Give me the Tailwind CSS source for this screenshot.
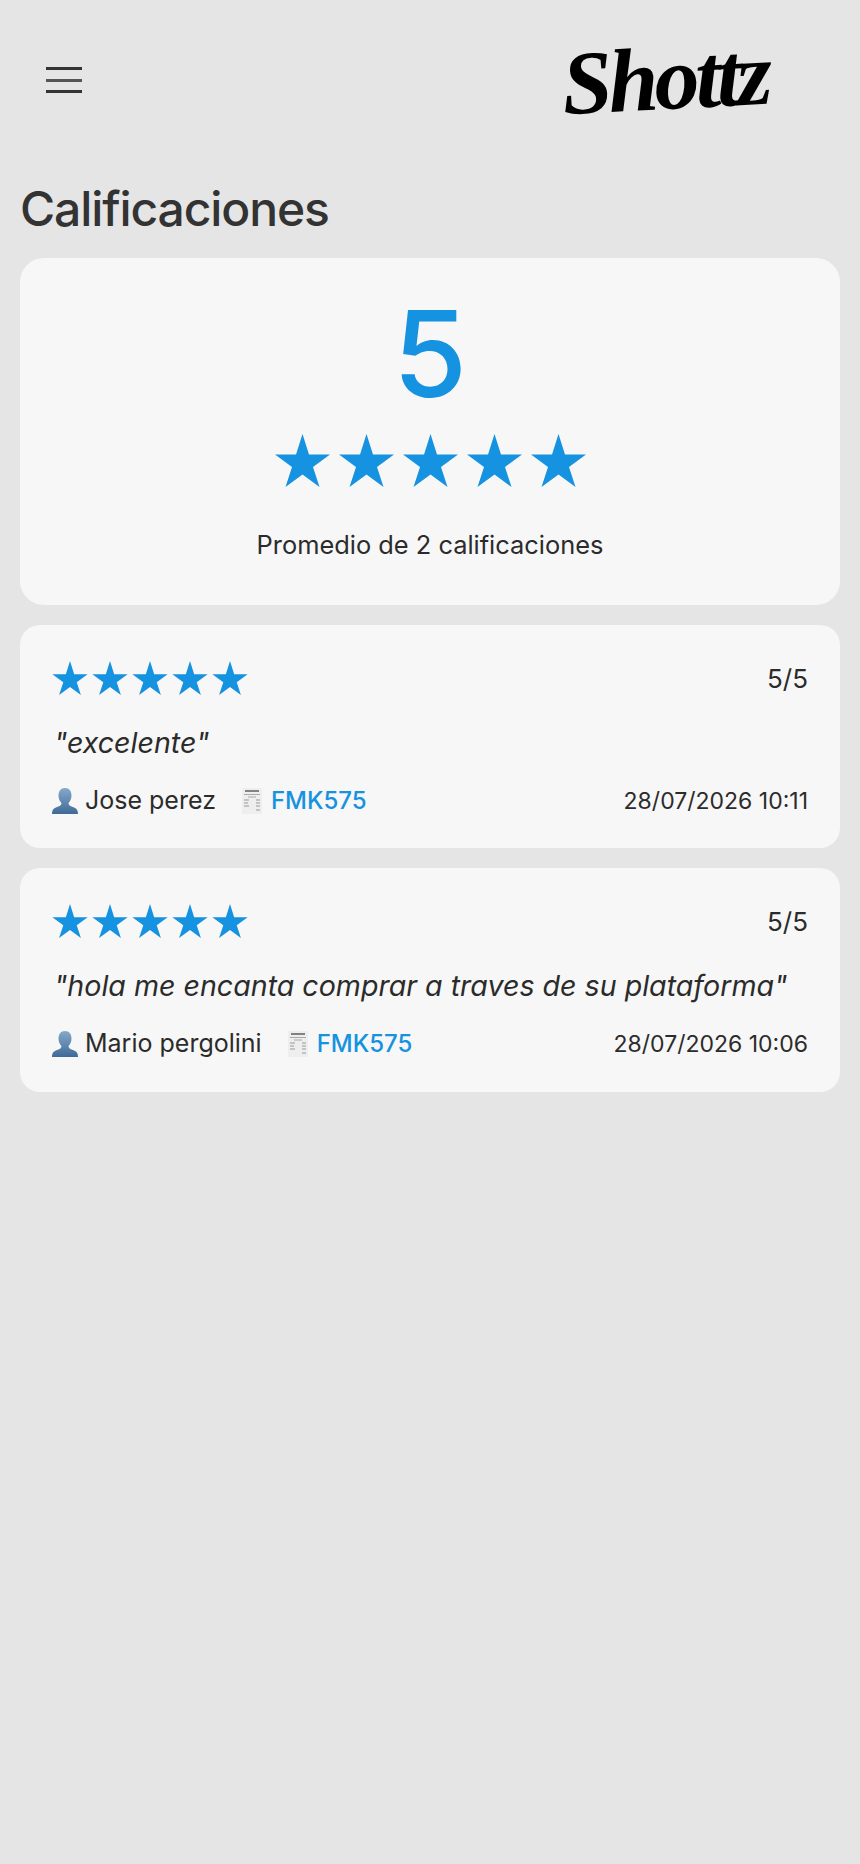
<!DOCTYPE html>
<html lang="es">
<head>
  <meta charset="UTF-8" />
  <title>Calificaciones</title>
  <script src="https://cdn.jsdelivr.net/npm/@tailwindcss/browser@4"></script>
</head>
<body class="bg-[#e5e5e5] text-[#2b2b2b] min-h-screen font-['Inter','Liberation_Sans',sans-serif]">

  <!-- iconos compartidos -->
  <svg class="absolute w-0 h-0">
    <defs>
      <linearGradient id="personFill" x1="0" y1="0" x2="0" y2="1">
        <stop offset="0" stop-color="#86a9cb" />
        <stop offset="1" stop-color="#3f6a97" />
      </linearGradient>
    </defs>
    <symbol id="star" viewBox="0 0 55 53">
      <path fill="#1592e0" d="M27.5 0L34 20.5H55L38 33L44.5 53L27.5 40.5L10.5 53L17 33L0 20.5H21Z" />
    </symbol>
    <symbol id="person" viewBox="0 0 26 26">
      <path fill="url(#personFill)" d="M13 0C17.5 0 19.5 3.5 19.5 7.5C19.5 11 18 13.5 16.5 15C16.5 17 18 18 21 19C24 20 26 21.5 26 26H0C0 21.5 2 20 5 19C8 18 9.5 17 9.5 15C8 13.5 6.5 11 6.5 7.5C6.5 3.5 8.5 0 13 0Z" />
    </symbol>
    <symbol id="receipt" viewBox="0 0 20 26">
      <rect width="20" height="26" fill="#eeeeee" />
      <path stroke="#666" stroke-width="1.6" d="M3 3H17" />
      <path stroke="#aaa" stroke-width="1" d="M2 6.5H18M6 9H14" />
      <path stroke="#999" stroke-width="1" d="M2 12H7M14 12H18M2 15H6M14 15H18M2 18H7M14 18H18M14 22H18" />
    </symbol>
  </svg>

  <!-- encabezado -->
  <header class="h-[178px] flex justify-between pl-[46px] pr-[92px]">
    <button class="w-9 h-[26px] mt-[67px] flex flex-col justify-between">
      <span class="block w-9 h-[3px] bg-[#333]"></span>
      <span class="block w-9 h-[3px] bg-[#555]"></span>
      <span class="block w-9 h-[3px] bg-[#333]"></span>
    </button>
    <div class="mt-[30px] h-[97px] leading-[97px] text-[90px] font-bold italic text-black font-['Liberation_Serif',serif] tracking-[-4px] -rotate-3">Shottz</div>
  </header>

  <main class="px-5">
    <h1 class="text-[48px] leading-[62px] font-medium text-[#333] tracking-[-1.1px] mb-[18px]">Calificaciones</h1>

    <!-- promedio -->
    <section class="h-[347px] bg-[#f7f7f7] rounded-[24px] flex flex-col items-center mb-5">
      <div class="mt-[30px] h-[132px] leading-[132px] text-[120px] font-medium text-[#1592e0]">5</div>
      <div class="mt-[14px] flex gap-[9px]">
        <svg class="w-[55px] h-[53px]"><use href="#star" /></svg>
        <svg class="w-[55px] h-[53px]"><use href="#star" /></svg>
        <svg class="w-[55px] h-[53px]"><use href="#star" /></svg>
        <svg class="w-[55px] h-[53px]"><use href="#star" /></svg>
        <svg class="w-[55px] h-[53px]"><use href="#star" /></svg>
      </div>
      <p class="mt-[38px] text-[25.4px] leading-[40px]">Promedio de 2 calificaciones</p>
    </section>

    <!-- reseñas -->
    <article class="h-[223px] bg-[#f7f7f7] rounded-[20px] px-8 pt-9 mb-5">
      <div class="flex justify-between items-center h-[34px]">
        <div class="flex gap-1">
          <svg class="w-9 h-[34px]"><use href="#star" /></svg>
          <svg class="w-9 h-[34px]"><use href="#star" /></svg>
          <svg class="w-9 h-[34px]"><use href="#star" /></svg>
          <svg class="w-9 h-[34px]"><use href="#star" /></svg>
          <svg class="w-9 h-[34px]"><use href="#star" /></svg>
        </div>
        <span class="text-[26px]">5/5</span>
      </div>
      <p class="mt-[28px] pl-[2px] text-[28.6px] leading-[40px] italic">"excelente"</p>
      <div class="mt-[21px] flex justify-between items-center h-[34px] text-[25px]">
        <div class="flex items-center">
          <svg class="w-[26px] h-[26px] mr-[7px]"><use href="#person" /></svg>
          <span>Jose perez</span>
          <svg class="w-5 h-[26px] ml-[26px] mr-[9px]"><use href="#receipt" /></svg>
          <span class="text-[#1592e0] font-medium text-[24px]">FMK575</span>
        </div>
        <span class="text-[23px]">28/07/2026 10:11</span>
      </div>
    </article>

    <article class="h-[224px] bg-[#f7f7f7] rounded-[20px] px-8 pt-9">
      <div class="flex justify-between items-center h-[34px]">
        <div class="flex gap-1">
          <svg class="w-9 h-[34px]"><use href="#star" /></svg>
          <svg class="w-9 h-[34px]"><use href="#star" /></svg>
          <svg class="w-9 h-[34px]"><use href="#star" /></svg>
          <svg class="w-9 h-[34px]"><use href="#star" /></svg>
          <svg class="w-9 h-[34px]"><use href="#star" /></svg>
        </div>
        <span class="text-[26px]">5/5</span>
      </div>
      <p class="mt-[28px] pl-[2px] text-[28.6px] leading-[40px] italic whitespace-nowrap">"hola me encanta comprar a traves de su plataforma"</p>
      <div class="mt-[21px] flex justify-between items-center h-[34px] text-[25px]">
        <div class="flex items-center">
          <svg class="w-[26px] h-[26px] mr-[7px]"><use href="#person" /></svg>
          <span>Mario pergolini</span>
          <svg class="w-5 h-[26px] ml-[26px] mr-[9px]"><use href="#receipt" /></svg>
          <span class="text-[#1592e0] font-medium text-[24px]">FMK575</span>
        </div>
        <span class="text-[23px]">28/07/2026 10:06</span>
      </div>
    </article>
  </main>
</body>
</html>
